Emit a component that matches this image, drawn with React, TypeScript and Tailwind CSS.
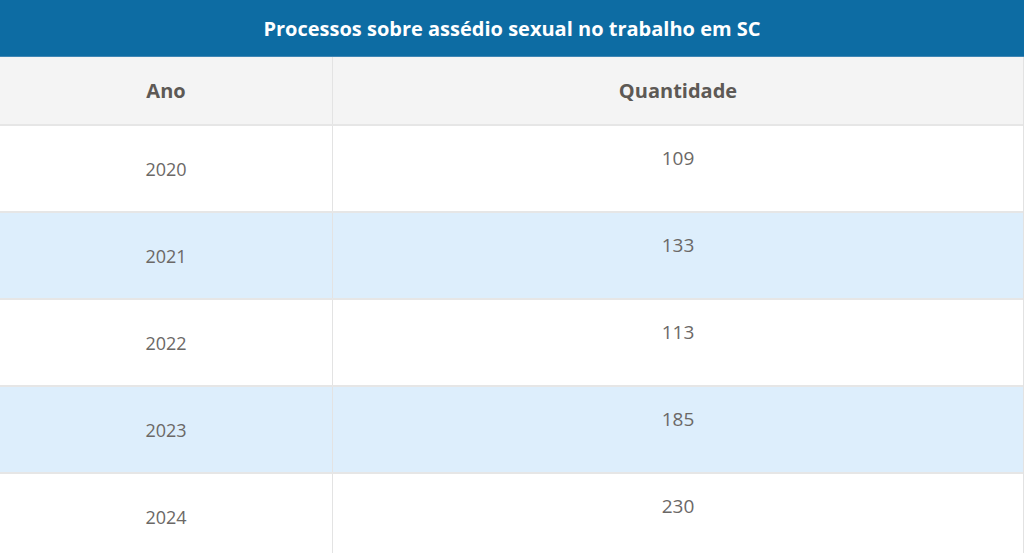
import React, { ReactElement } from 'react';

const rows = [
  { ano: '2020', qtd: '109' },
  { ano: '2021', qtd: '133' },
  { ano: '2022', qtd: '113' },
  { ano: '2023', qtd: '185' },
  { ano: '2024', qtd: '230' },
];

const App = (): ReactElement => {
  return (
    <div className="w-[1024px] bg-white font-['Open_Sans',sans-serif]">
      <div className="flex h-[57px] items-center justify-center border-b border-[#3f86b4] bg-[#0d6ca3] pt-[2px] text-[20px] font-bold text-white">
        Processos sobre assédio sexual no trabalho em SC
      </div>
      <div className="border-r border-[#e2e2e2]">
        <div className="flex h-[69px] border-b-2 border-[#e6e6e6] bg-[#f4f4f4] text-[20px] font-bold text-[#5d5955]">
          <div className="flex w-[333px] items-center justify-center border-r border-[#e3e3e3]">Ano</div>
          <div className="flex flex-1 items-center justify-center">Quantidade</div>
        </div>
        {rows.map((row, idx) => (
          <div
            key={row.ano}
            className={`flex h-[87px] border-b-2 border-[#e6e6e6] text-[#6b6866] ${
              idx % 2 ? 'bg-[#ddeefc]' : 'bg-white'
            }`}
          >
            <div className="flex w-[333px] items-center justify-center border-r border-[#e3e3e3] pt-[2px] text-[18px]">
              {row.ano}
            </div>
            <div className="flex flex-1 justify-center pt-[19px] text-[19px] leading-[26px]">{row.qtd}</div>
          </div>
        ))}
      </div>
    </div>
  );
};

export default App;
